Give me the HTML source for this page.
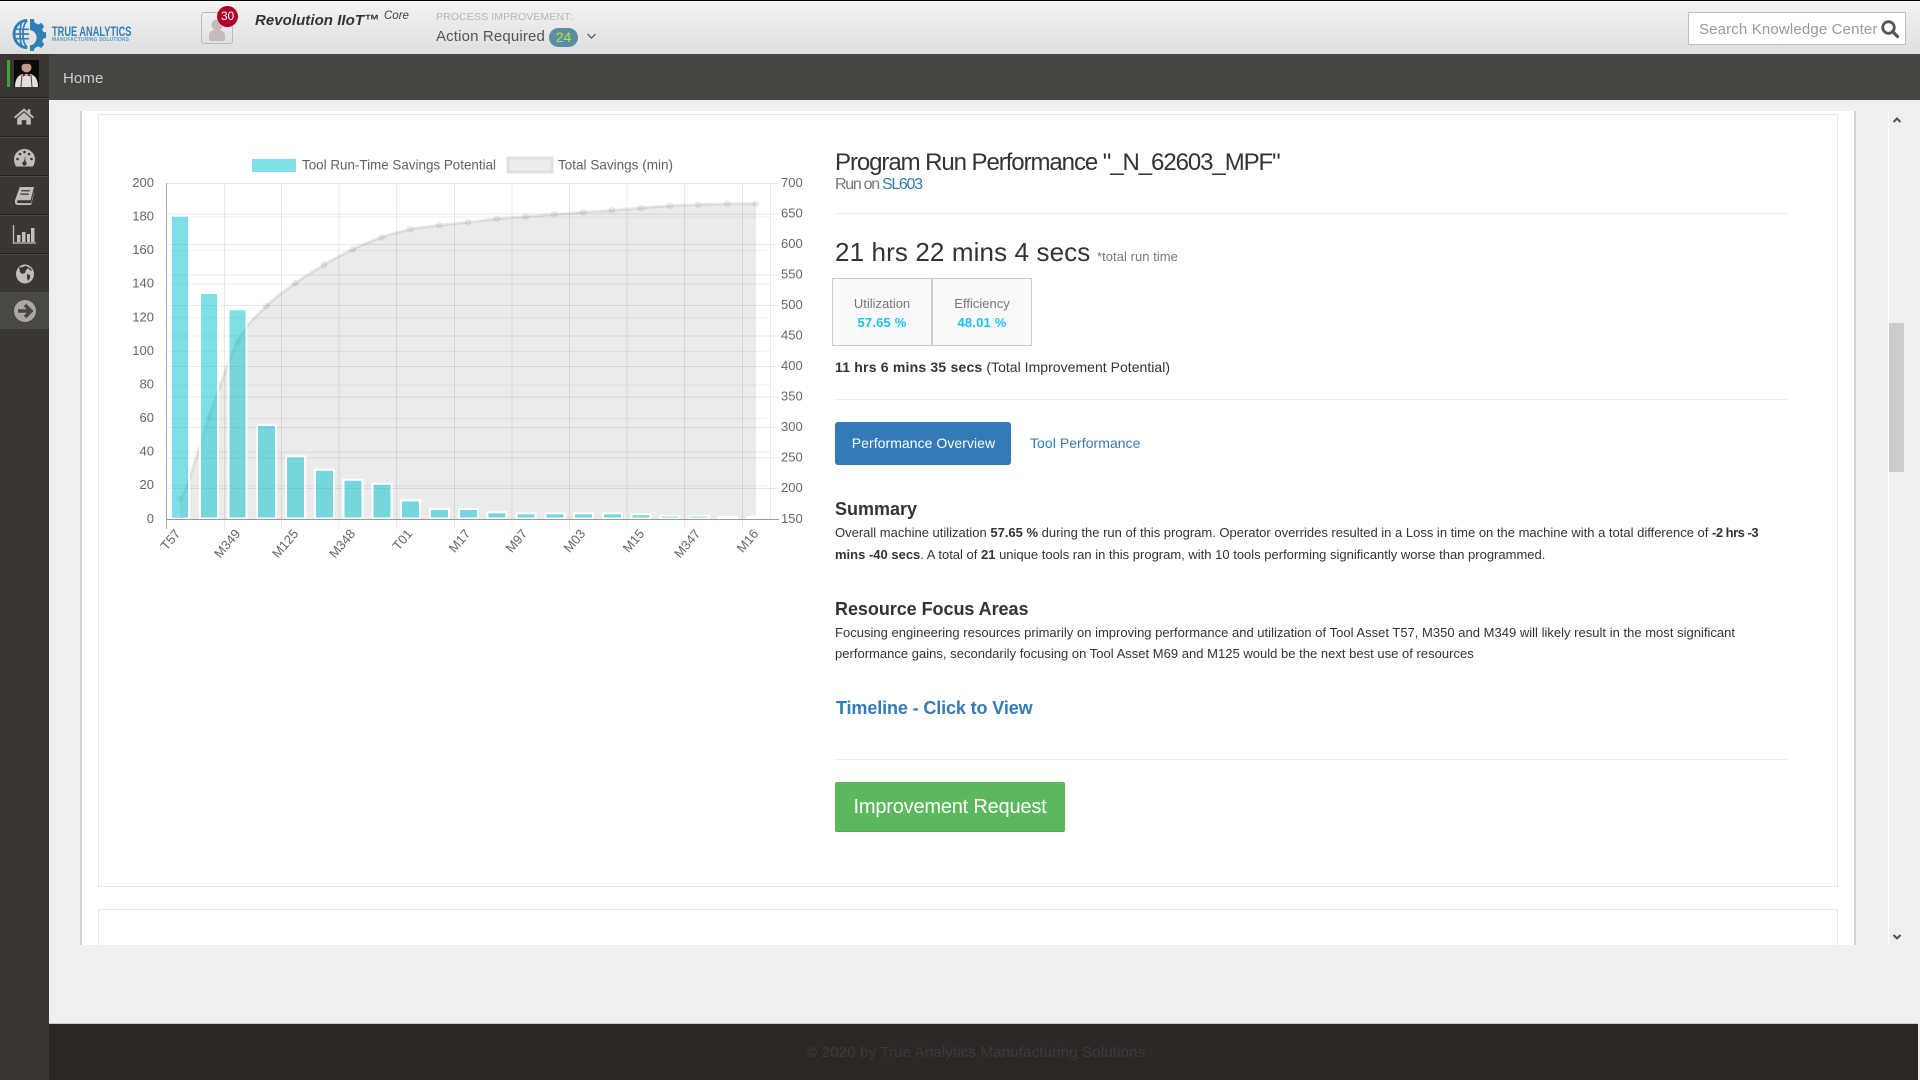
<!DOCTYPE html>
<html><head><meta charset="utf-8"><title>Program Run Performance</title>
<style>
*{box-sizing:border-box}
html,body{margin:0;padding:0;width:1920px;height:1080px;overflow:hidden;background:#efefef;font-family:"Liberation Sans",Arial,sans-serif;color:#333}
.a{position:absolute;white-space:nowrap}
.ln{position:absolute;height:1px;background:#eee;left:835px;width:953px}
a{color:#337ab7;text-decoration:none}
svg{position:absolute;overflow:visible}
svg text{font-family:"Liberation Sans",Arial,sans-serif}
.sep{position:absolute;left:0;width:49px;height:2px;background:#262321;border-bottom:1px solid #4c4946}
</style></head><body>
<!-- header -->
<div class="a" style="left:0;top:0;width:1920px;height:54px;background:linear-gradient(#f3f3f3,#dfdfdf);border-top:1px solid #000"></div>
<svg style="left:14px;top:18px" width="32" height="32" viewBox="0 0 34 34">
<g fill="none" stroke="#2f7fb8" stroke-width="2">
<path d="M14 2.500A14 14.500 0 1 0 14 31.500" stroke-width="3"/>
<path d="M14 3C8 8 8 26 14 31M1 12H16M1 22H16M0 17H16M8 5C6 11 6 23 8 29" stroke-width="1.800"/>
</g>
<path d="M17 1h4l1 4 4 2 3-2 3 4-2 3 1 3h3v6l-3 1-1 3 2 3-3 4-3-2-4 2-1 3h-4v-6c4 0 7-4 7-8s-3-8-7-8z" fill="#2f7fb8"/>
</svg>
<div class="a" style="left:52px;top:24px;font-size:14px;font-weight:bold;color:#2f7fb8;transform-origin:0 0;transform:scaleX(.66);line-height:15px">TRUE ANALYTICS</div>
<div class="a" style="left:52px;top:37px;font-size:5px;font-weight:bold;color:#5d9cc9;line-height:6px;letter-spacing:.1px">MANUFACTURING SOLUTIONS</div>
<div class="a" style="left:201px;top:12px;width:32px;height:32px;border:1px solid #bbb;border-radius:3px;background:linear-gradient(#f0f0f0,#e2e2e2)"></div>
<svg style="left:201px;top:12px" width="32" height="32"><circle cx="16" cy="13" r="5.500" fill="#c4bcb8"/><path d="M8 28v-5c0-4 4-5 8-5s8 1 8 5v5a2 2 0 0 1-2 1H10a2 2 0 0 1-2-1z" fill="#c4bcb8"/></svg>
<div class="a" style="left:217px;top:6px;width:21px;height:21px;border-radius:50%;background:#b0002a;color:#fff;font-size:12px;line-height:21px;text-align:center">30</div>
<div class="a" style="left:255px;top:12px;font-size:15px;font-weight:bold;font-style:italic;color:#333;line-height:18px;letter-spacing:.05px">Revolution IIoT™</div>
<div class="a" style="left:384px;top:9px;font-size:11.500px;font-style:italic;color:#444;line-height:14px">Core</div>
<div class="a" style="left:436px;top:11px;font-size:10.500px;color:#b5b5b5;line-height:13px;letter-spacing:.12px">PROCESS IMPROVEMENT:</div>
<div class="a" style="left:436px;top:28px;font-size:15px;color:#555;line-height:18px;letter-spacing:.15px">Action Required</div>
<div class="a" style="left:549px;top:28px;width:29px;height:19px;border-radius:10px;background:#5a8ea0;color:#b8ea2c;font-size:14px;line-height:19px;text-align:center">24</div>
<svg style="left:587px;top:33px" width="9" height="6"><path d="M.5 1L4.500 5L8.500 1" fill="none" stroke="#555" stroke-width="1.200"/></svg>
<div class="a" style="left:1688px;top:12px;width:218px;height:33px;background:#fff;border:1px solid #c0c0c0"></div>
<div class="a" style="left:1699px;top:20px;font-size:15px;color:#999;line-height:20px;letter-spacing:.15px">Search Knowledge Center</div>
<svg style="left:1881px;top:20px" width="18" height="18"><circle cx="7.500" cy="7.500" r="5.800" fill="none" stroke="#555" stroke-width="2.800"/><path d="M11.500 11.500L16.500 16.500" stroke="#555" stroke-width="3.200" stroke-linecap="round"/></svg>
<!-- nav -->
<div class="a" style="left:49px;top:54px;width:1871px;height:46px;background:#474542"></div>
<div class="a" style="left:63px;top:70px;font-size:15px;color:#c8d0d6;line-height:18px;letter-spacing:.1px">Home</div>
<!-- sidebar -->
<div class="a" style="left:0;top:54px;width:49px;height:1026px;background:#3a3633"></div>
<div class="a" style="left:7px;top:60px;width:3px;height:27px;background:#3aa72a"></div>
<svg style="left:14px;top:60px" width="25" height="27" viewBox="0 0 25 27"><rect width="25" height="27" fill="#0a0a0a"/><path d="M1 27c0-8 3-12 8-13h7c5 1 8 5 8 13z" fill="#e4dfd9"/><circle cx="12.500" cy="7.500" r="5" fill="#c09a84"/><path d="M7.500 6c1-5 9-5 10 0l-2-2h-6z" fill="#2a1d16"/><path d="M9 13.500l3.500 1.500 3.500-1.500v3l-3.500-1.500-3.500 1.500z" fill="#6a1a1a"/><path d="M8 15l-1 12M17 15l1 12" stroke="#4c3a3a" stroke-width="1"/></svg>
<div class="sep" style="top:97px"></div>
<div class="sep" style="top:136px"></div>
<div class="sep" style="top:175px"></div>
<div class="sep" style="top:214px"></div>
<div class="sep" style="top:253px"></div>
<div class="a" style="left:0;top:292px;width:49px;height:37px;background:#4a4845"></div>
<svg style="left:14px;top:108px" width="20" height="17" viewBox="0 0 22 18"><path d="M11 0L0 9.500l1.500 1.500L11 3l9.500 8L22 9.500 18 6V1h-3v2.500z" fill="#c2bdb8"/><path d="M3.500 11L11 4.500 18.500 11v7h-5v-5h-5v5h-5z" fill="#c2bdb8"/></svg>
<svg style="left:14px;top:149px" width="21" height="18" viewBox="0 0 21 18"><path d="M10.500 0C4.700 0 0 4.500 0 10.500c0 3 1 5 2 7h17c1-2 2-4 2-7C21 4.500 16.300 0 10.500 0z" fill="#c2bdb8"/><g fill="#3a3633"><circle cx="3.500" cy="10" r="1.300"/><circle cx="6" cy="5" r="1.300"/><circle cx="10.500" cy="3" r="1.300"/><circle cx="15" cy="5" r="1.300"/><circle cx="17.500" cy="10" r="1.300"/><path d="M9.500 16l1.500-9 1 9z"/><circle cx="10.500" cy="14.500" r="2.200"/></g></svg>
<svg style="left:15px;top:187px" width="19" height="18" viewBox="0 0 20 19"><path d="M5 0h15l-3.500 14H3.500c-2 0-2 3 0 3h13.500l3-12v2l-3 12H3c-3 0-3.500-3-3-5z" fill="#c2bdb8"/><path d="M6.500 4h9M5.500 7.500h9" stroke="#3a3633" stroke-width="1.300"/></svg>
<svg style="left:13px;top:225px" width="23" height="19" viewBox="0 0 23 19"><path d="M.5 0v18H23" fill="none" stroke="#c2bdb8" stroke-width="1.300"/><g fill="#c2bdb8"><rect x="4" y="10" width="3.500" height="7"/><rect x="9" y="7" width="3.500" height="10"/><rect x="14" y="9" width="3" height="8"/><rect x="18" y="3" width="3.500" height="14"/></g></svg>
<svg style="left:16px;top:264px" width="18" height="20" viewBox="0 0 18 20"><ellipse cx="9" cy="10" rx="9" ry="9.500" fill="#c2bdb8"/><path d="M3 3c2 1 4 0 6-1 2 0 3 1 4 2l-3 2-1 3-3 1-2-2zM11 10l3 1 0 3-2 3-1-3zM13 3l3 3-1 1-2-2z" fill="#3a3633"/></svg>
<svg style="left:13px;top:299px" width="24" height="24" viewBox="0 0 24 24"><circle cx="12" cy="12" r="11" fill="#aaa7a4"/><path d="M5 12h12M12 6l6 6-6 6" fill="none" stroke="#474542" stroke-width="3.400"/></svg>
<!-- content -->
<div class="a" style="left:80px;top:111px;width:1776px;height:834px;background:#fff;border-left:2px solid #d2d2d2;border-right:2px solid #d2d2d2"></div>
<div class="a" style="left:98px;top:114px;width:1740px;height:773px;border:1px solid #dfe6ec"></div>
<div class="a" style="left:98px;top:909px;width:1740px;height:36px;border:1px solid #e3e6e9;border-bottom:0"></div>
<div class="a" style="left:1888px;top:111px;width:1px;height:834px;background:#fff"></div>
<div class="a" style="left:1889px;top:323px;width:15px;height:149px;background:#ccc"></div>
<svg style="left:1893px;top:117px" width="8" height="6"><path d="M.5 5L4 1.500 7.500 5" fill="none" stroke="#505050" stroke-width="2"/></svg>
<svg style="left:1893px;top:934px" width="8" height="6"><path d="M.5 1L4 4.500 7.500 1" fill="none" stroke="#505050" stroke-width="2"/></svg>
<!-- chart -->
<svg style="left:0;top:0" width="1920" height="1080">
<rect x="252" y="159" width="44" height="13" fill="#7fdfe7"/>
<rect x="508" y="158" width="44" height="14" fill="#ebebeb" stroke="#e0e0e0" stroke-width="3"/>
<text x="302" y="169.500" font-size="14" fill="#606060" textLength="194" lengthAdjust="spacingAndGlyphs">Tool Run-Time Savings Potential</text>
<text x="558" y="169.500" font-size="14" fill="#606060" textLength="115" lengthAdjust="spacingAndGlyphs">Total Savings (min)</text>
<!-- grid -->
<g stroke="#000" stroke-opacity=".05" stroke-width="1.300">
<path d="M166 217H770M166 250.600H770M166 284.200H770M166 317.800H770M166 351.400H770M166 385H770M166 418.600H770M166 452.200H770M166 485.800H770"/>
</g>
<g stroke="#000" stroke-opacity=".085" stroke-width="1">
<path d="M166 183.500H779M166 214H779M166 244.500H779M166 275H779M166 305.500H779M166 336H779M166 366.500H779M166 397H779M166 427.500H779M166 458H779M166 488.500H779"/>
<path d="M224.500 183V529M281.500 183V529M339 183V529M396.500 183V529M454.500 183V529M512 183V529M569.500 183V529M627 183V529M684.500 183V529M742.500 183V529M770.500 183V519"/>
</g>
<!-- line area -->
<path d="M180,499.300 C189.600,485.600 199.200,443.600 208.800,417.300 S228,359.900 237.600,341.300 S256.800,315.700 266.400,306 S285.600,290.200 295.200,283.300 S314.400,270.400 324,264.700 S343.200,253.900 352.800,249.300 S372,240.600 381.600,237.300 S400.800,231.300 410.400,229.300 S429.600,226.500 439.200,225.300 S458.400,223.400 468,222.300 S487.200,219.600 496.800,218.700 S516,217.400 525.600,216.700 S544.800,215 554.400,214.300 S573.600,213 583.200,212.300 S602.400,211 612,210.300 S631.200,208.800 640.800,208 S660,206.250 669.600,205.700 S688.800,205 698.400,204.700 S717.600,203.900 727.200,203.700 S746.400,203.700 756,203.700 L756,519 L180,519 Z" fill="#000" fill-opacity=".078"/>
<path d="M180,499.300 C189.600,485.600 199.200,443.600 208.800,417.300 S228,359.900 237.600,341.300 S256.800,315.700 266.400,306 S285.600,290.200 295.200,283.300 S314.400,270.400 324,264.700 S343.200,253.900 352.800,249.300 S372,240.600 381.600,237.300 S400.800,231.300 410.400,229.300 S429.600,226.500 439.200,225.300 S458.400,223.400 468,222.300 S487.200,219.600 496.800,218.700 S516,217.400 525.600,216.700 S544.800,215 554.400,214.300 S573.600,213 583.200,212.300 S602.400,211 612,210.300 S631.200,208.800 640.800,208 S660,206.250 669.600,205.700 S688.800,205 698.400,204.700 S717.600,203.900 727.200,203.700 S746.400,203.700 756,203.700" fill="none" stroke="#000" stroke-width="3" stroke-opacity=".08"/>
<g fill="#000" fill-opacity=".06" stroke="#000" stroke-opacity=".05" stroke-width="1">
<circle cx="180" cy="499.300" r="3"/><circle cx="208.800" cy="417.300" r="3"/><circle cx="237.600" cy="341.300" r="3"/><circle cx="266.400" cy="306" r="3"/><circle cx="295.200" cy="283.300" r="3"/><circle cx="324" cy="264.700" r="3"/><circle cx="352.800" cy="249.300" r="3"/><circle cx="381.600" cy="237.300" r="3"/><circle cx="410.400" cy="229.300" r="3"/><circle cx="439.200" cy="225.300" r="3"/><circle cx="468" cy="222.300" r="3"/><circle cx="496.800" cy="218.700" r="3"/><circle cx="525.600" cy="216.700" r="3"/><circle cx="554.400" cy="214.300" r="3"/><circle cx="583.200" cy="212.300" r="3"/><circle cx="612" cy="210.300" r="3"/><circle cx="640.800" cy="208" r="3"/><circle cx="669.600" cy="205.700" r="3"/><circle cx="698.400" cy="204.700" r="3"/><circle cx="727.200" cy="203.700" r="3"/><circle cx="756" cy="203.700" r="3"/>
</g>
<!-- bars -->
<g fill="rgb(22,197,211)" fill-opacity=".55" stroke="#fff" stroke-width="2" transform="translate(0 -1)">
<rect x="171" y="216.700" width="18" height="303"/>
<rect x="200" y="294" width="18" height="225.500"/>
<rect x="228.500" y="310.300" width="18" height="209.200"/>
<rect x="257" y="426" width="19" height="93.500"/>
<rect x="286" y="457.300" width="19" height="62.200"/>
<rect x="315" y="470.700" width="19" height="48.800"/>
<rect x="343.500" y="480.700" width="19" height="38.800"/>
<rect x="372.500" y="484.700" width="19" height="34.800"/>
<rect x="401" y="501.300" width="19" height="18.200"/>
<rect x="430" y="510" width="19" height="9.500"/>
<rect x="459" y="510" width="19" height="9.500"/>
<rect x="487.500" y="513.300" width="19" height="6.200"/>
<rect x="516.500" y="514.300" width="19" height="5.200"/>
<rect x="545.500" y="514.300" width="19" height="5.200"/>
<rect x="574" y="514.300" width="19" height="5.200"/>
<rect x="603" y="514.300" width="19" height="5.200"/>
<rect x="631.500" y="515.300" width="19" height="4.200"/>
<rect x="660.500" y="516.700" width="19" height="2.800"/>
<rect x="689.500" y="516.700" width="19" height="2.800"/>
<rect x="718" y="518" width="19" height="1.500"/>
<rect x="747" y="518" width="19" height="1.500"/>
</g>
<path d="M166.500 183V529" stroke="#aaa" stroke-width="1"/>
<path d="M166 519.500H779" stroke="#999" stroke-width="1"/>
<!-- ticks -->
<g font-size="13" fill="#666" text-anchor="end">
<text x="154" y="187">200</text><text x="154" y="220.500">180</text><text x="154" y="254">160</text><text x="154" y="287.500">140</text><text x="154" y="321.500">120</text><text x="154" y="355">100</text><text x="154" y="388.500">80</text><text x="154" y="422">60</text><text x="154" y="455.500">40</text><text x="154" y="489">20</text><text x="154" y="523">0</text>
</g>
<g font-size="13" fill="#666">
<text x="781" y="187">700</text><text x="781" y="217.500">650</text><text x="781" y="248">600</text><text x="781" y="278.500">550</text><text x="781" y="309">500</text><text x="781" y="339.500">450</text><text x="781" y="370">400</text><text x="781" y="400.500">350</text><text x="781" y="431">300</text><text x="781" y="461.500">250</text><text x="781" y="492">200</text><text x="781" y="523">150</text>
</g>
<g font-size="13" fill="#666" text-anchor="end">
<text transform="translate(181 534) rotate(-50)">T57</text>
<text transform="translate(241 534) rotate(-50)">M349</text>
<text transform="translate(299 534) rotate(-50)">M125</text>
<text transform="translate(356 534) rotate(-50)">M348</text>
<text transform="translate(413 534) rotate(-50)">T01</text>
<text transform="translate(471 534) rotate(-50)">M17</text>
<text transform="translate(528 534) rotate(-50)">M97</text>
<text transform="translate(586 534) rotate(-50)">M03</text>
<text transform="translate(645 534) rotate(-50)">M15</text>
<text transform="translate(701 534) rotate(-50)">M347</text>
<text transform="translate(759 534) rotate(-50)">M16</text>
</g>
</svg>
<!-- right col -->
<div class="a" style="left:835px;top:149px;font-size:24px;line-height:28px;letter-spacing:-1.070px">Program Run Performance "_N_62603_MPF"</div>
<div class="a" style="left:835px;top:176px;font-size:16px;line-height:18px;letter-spacing:-1.300px;color:#777">Run on <a>SL603</a></div>
<div class="ln" style="top:213px"></div>
<div class="a" style="left:835px;top:236px;font-size:26px;line-height:32px;letter-spacing:.12px">21 hrs 22 mins 4 secs</div>
<div class="a" style="left:1097px;top:249px;font-size:13px;line-height:15px;color:#777;letter-spacing:.05px">*total run time</div>
<div class="a" style="left:832px;top:278px;width:100px;height:68px;background:#f9f9f9;border:1px solid #ccc"></div>
<div class="a" style="left:932px;top:278px;width:100px;height:68px;background:#f9f9f9;border:1px solid #ccc"></div>
<div class="a" style="left:832px;top:296px;width:100px;text-align:center;font-size:13px;line-height:16px;color:#777">Utilization</div>
<div class="a" style="left:932px;top:296px;width:100px;text-align:center;font-size:13px;line-height:16px;color:#777">Efficiency</div>
<div class="a" style="left:832px;top:315px;width:100px;text-align:center;font-size:13px;font-weight:bold;line-height:16px;color:#1cbfff;letter-spacing:.2px">57.65 %</div>
<div class="a" style="left:932px;top:315px;width:100px;text-align:center;font-size:13px;font-weight:bold;line-height:16px;color:#1cbfff;letter-spacing:.2px">48.01 %</div>
<div class="a" style="left:835px;top:359px;font-size:14px;line-height:16px;letter-spacing:.03px"><b style="letter-spacing:.2px">11 hrs 6 mins 35 secs</b> (Total Improvement Potential)</div>
<div class="ln" style="top:399px"></div>
<div class="a" style="left:835px;top:422px;width:176px;height:43px;background:#337ab7;border-radius:3px;color:#fff;font-size:14px;line-height:43px;text-align:center;letter-spacing:.05px;padding-left:1px">Performance Overview</div>
<div class="a" style="left:1030px;top:434px;font-size:14px;line-height:18px;color:#337ab7;letter-spacing:.05px">Tool Performance</div>
<div class="a" style="left:835px;top:498px;font-size:18px;font-weight:bold;line-height:22px">Summary</div>
<div class="a" style="left:835px;top:522px;font-size:13px;line-height:21.600px">Overall machine utilization <b>57.65 %</b> during the run of this program. Operator overrides resulted in a Loss in time on the machine with a total difference of <b style="letter-spacing:-.5px">-2 hrs -3</b><br><b>mins -40 secs</b>. A total of <b>21</b> unique tools ran in this program, with 10 tools performing significantly worse than programmed.</div>
<div class="a" style="left:835px;top:598px;font-size:18px;font-weight:bold;line-height:22px;letter-spacing:-.05px">Resource Focus Areas</div>
<div class="a" style="left:835px;top:622px;font-size:13px;line-height:21px;letter-spacing:.015px">Focusing engineering resources primarily on improving performance and utilization of Tool Asset T57, M350 and M349 will likely result in the most significant<br>performance gains, secondarily focusing on Tool Asset M69 and M125 would be the next best use of resources</div>
<div class="a" style="left:836px;top:697px;font-size:18px;font-weight:bold;line-height:22px;color:#337ab7;letter-spacing:-.12px">Timeline - Click to View</div>
<div class="ln" style="top:759px"></div>
<div class="a" style="left:835px;top:782px;width:230px;height:50px;background:#5cb85c;border-radius:2px;border-bottom:1px solid #4cae4c;color:#fff;font-size:20px;line-height:50px;text-align:center;letter-spacing:-.2px">Improvement Request</div>
<!-- footer -->
<div class="a" style="left:49px;top:1023px;width:1869px;height:57px;background:#2c2826;border-top:1px solid #ccc"></div>
<div class="a" style="left:806px;top:1044px;font-size:15px;line-height:18px;color:#3c3a3e;letter-spacing:.17px">© 2020 by True Analytics Manufacturing Solutions</div>
</body></html>
